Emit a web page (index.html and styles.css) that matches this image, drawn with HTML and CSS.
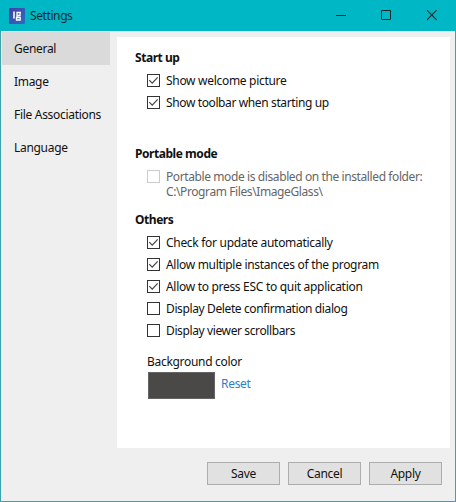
FILE: index.html
```
<!DOCTYPE html>
<html lang="en">
<head>
<meta charset="utf-8">
<title>Settings</title>
<link rel="stylesheet" href="styles.css">
</head>
<body>
<div class="window">
  <header class="titlebar">
    <svg class="logo" width="16" height="16" viewBox="0 0 16 16">
      <defs><linearGradient id="g" x1="0" y1="0" x2="1" y2="1"><stop offset="0" stop-color="#4440a8"/><stop offset="1" stop-color="#2c6cc0"/></linearGradient></defs>
      <rect width="16" height="16" rx="1" fill="url(#g)"/>
      <path d="M5 3.500v7" fill="none" stroke="#fff" stroke-width="1.600"/>
      <path d="M12 4.500H8v3h3v-3M8.500 7.500l-1 2h3.700v2.500H7.500V9.500" fill="none" stroke="#fff" stroke-width="1.300"/>
    </svg>
    <h1 class="title">Settings</h1>
    <svg class="controls" width="102" height="11" viewBox="0 0 102 11" fill="none" stroke="#10282b">
      <path d="M0 5.500h10M45.500 .5h9v9h-9z"/>
      <path d="M91 .2l9.600 9.600M100.600 .2L91 9.800" stroke-width="1.200"/>
    </svg>
  </header>
  <div class="body">
    <nav class="sidebar">
      <a class="tab active">General</a>
      <a class="tab">Image</a>
      <a class="tab">File Associations</a>
      <a class="tab">Language</a>
    </nav>
    <main class="panel">
      <section class="group startup">
        <h2>Start up</h2>
        <label class="option"><span class="box"><svg width="11" height="11" viewBox="0 0 11 11"><path d="M1.300 5.200l2.900 2.900 5.500-5.800"/></svg></span><span>Show welcome picture</span></label>
        <label class="option tight"><span class="box"><svg width="11" height="11" viewBox="0 0 11 11"><path d="M1.300 5.200l2.900 2.900 5.500-5.800"/></svg></span><span>Show toolbar when starting up</span></label>
      </section>
      <section class="group portable">
        <h2>Portable mode</h2>
        <label class="option disabled"><span class="box"></span><span class="note"><span class="line">Portable mode is disabled on the installed folder:</span><span class="line">C:\Program Files\ImageGlass\</span></span></label>
      </section>
      <section class="group others">
        <h2>Others</h2>
        <label class="option"><span class="box"><svg width="11" height="11" viewBox="0 0 11 11"><path d="M1.300 5.200l2.900 2.900 5.500-5.800"/></svg></span><span>Check for update automatically</span></label>
        <label class="option"><span class="box"><svg width="11" height="11" viewBox="0 0 11 11"><path d="M1.300 5.200l2.900 2.900 5.500-5.800"/></svg></span><span>Allow multiple instances of the program</span></label>
        <label class="option"><span class="box"><svg width="11" height="11" viewBox="0 0 11 11"><path d="M1.300 5.200l2.900 2.900 5.500-5.800"/></svg></span><span>Allow to press ESC to quit application</span></label>
        <label class="option tight"><span class="box"></span><span>Display Delete confirmation dialog</span></label>
        <label class="option tight"><span class="box"></span><span>Display viewer scrollbars</span></label>
      </section>
      <section class="background">
        <div>Background color</div>
        <div class="color-row"><span class="swatch"></span><a class="reset">Reset</a></div>
      </section>
    </main>
  </div>
  <footer class="actions">
    <button>Save</button>
    <button>Cancel</button>
    <button>Apply</button>
  </footer>
</div>
</body>
</html>
```

FILE: styles.css
```
* { box-sizing: border-box; }
body { margin: 0; }
.window {
  width: 456px;
  height: 502px;
  display: flex;
  flex-direction: column;
  background: #efefef;
  border: 1px solid #3aa3ab;
  border-top: 0;
  font: 12px/16px "Noto Sans", "Open Sans", sans-serif;
  letter-spacing: -0.3px;
  color: #111;
}
.titlebar {
  height: 31px;
  margin: 0 -1px;
  padding: 0 18px 0 9px;
  display: flex;
  align-items: center;
  background: #00b7c5;
  flex: none;
}
.title { margin: 1px auto 0 5px; font-size: 12px; font-weight: 400; letter-spacing: -0.4px; color: #0b2d32; }
.body { display: flex; height: 417px; padding: 1px 5px 0 1px; }
.sidebar { width: 108px; margin-right: 7px; }
.tab { display: flex; align-items: center; height: 33px; padding-left: 12px; white-space: nowrap; }
.active { background: #dadada; }
.panel { flex: 1; margin-top: 5px; padding: 13px 0 0 18px; background: #fff; }
.group h2 { margin: 0; font-size: 12px; line-height: 16px; letter-spacing: -0.45px; }
.startup { height: 96px; }
.portable { height: 66px; }
.others { height: 134px; }
.option { display: flex; align-items: center; gap: 6px; height: 22px; margin-left: 12px; white-space: nowrap; }
.tight { letter-spacing: -0.38px; }
.startup h2, .others h2 { margin-bottom: 4px; }
.box { width: 13px; height: 13px; margin-bottom: 2px; flex: none; border: 1px solid #333; display: flex; }
.box svg { fill: none; stroke: #444; stroke-width: 1.2; }
.disabled { align-items: flex-start; height: auto; padding-top: 7px; color: #666; }
.disabled .box { margin-top: 1px; border-color: #ccc; }
.note { line-height: 15px; letter-spacing: -0.4px; }
.line { display: block; }
.background { margin: 8px 0 0 12px; }
.color-row { display: flex; margin: 2px 0 0 1px; gap: 6px; }
.swatch { width: 67px; height: 27px; background: #4b4948; border: 1px solid #656565; }
.reset { margin-top: 4px; color: #2b80cc; }
.actions { display: flex; justify-content: flex-end; gap: 8px; padding: 14px 13px 0 0; }
.actions button {
  width: 73px;
  height: 23px;
  padding: 0;
  background: #e1e1e1;
  border: 1px solid #adadad;
  font: inherit;
  letter-spacing: inherit;
  color: #111;
}
```
